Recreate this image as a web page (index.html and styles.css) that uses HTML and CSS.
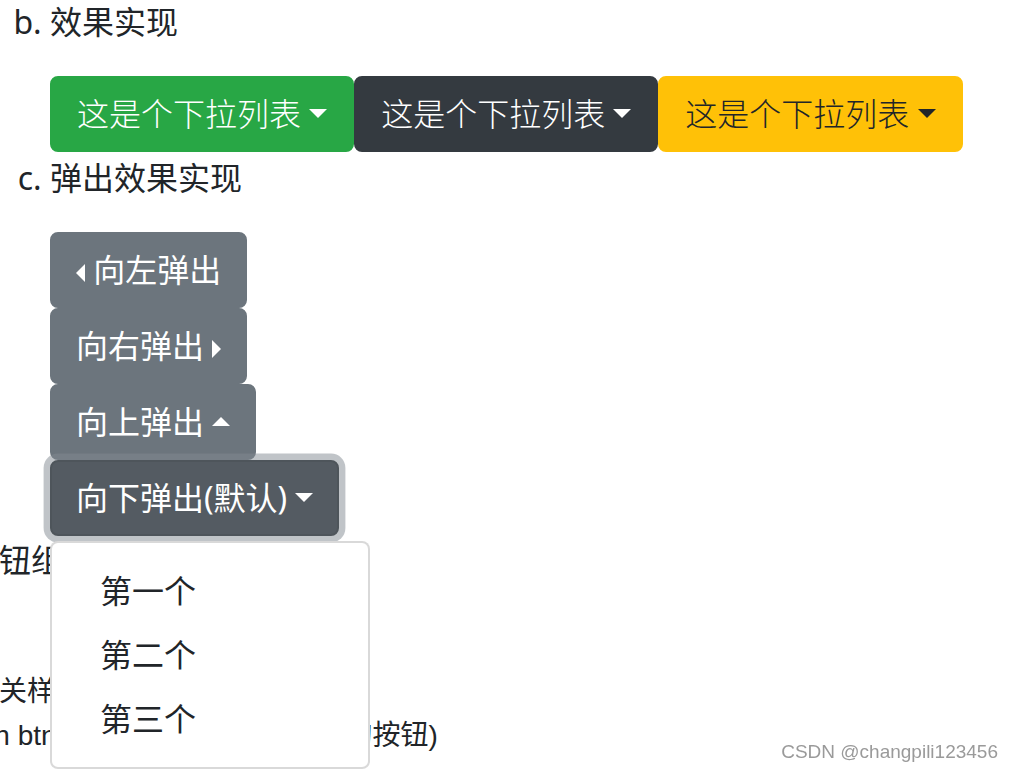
FILE: index.html
```html
<!DOCTYPE html>
<html lang="zh-CN">
  <head>
    <meta charset="UTF-8" />
    <meta name="viewport" content="width=device-width, initial-scale=1.0" />
    <title>下拉菜单</title>
    <link rel="stylesheet" href="styles.css">
  </head>
  <body>
    <ol class="steps" start="2">
      <li class="step">
        <p class="step-title">效果实现</p>
        <div class="btn-row">
          <div class="drop">
            <button class="btn btn-success caret-down">这是个下拉列表</button>
          </div>
          <div class="drop">
            <button class="btn btn-dark caret-down">这是个下拉列表</button>
          </div>
          <div class="drop">
            <button class="btn btn-warning caret-down">这是个下拉列表</button>
          </div>
        </div>
      </li>
      <li class="step">
        <p class="step-title">弹出效果实现</p>
        <div class="popups">
          <div class="drop">
            <button class="btn btn-secondary caret-left">向左弹出</button>
          </div>
          <div class="drop">
            <button class="btn btn-secondary caret-right">向右弹出</button>
          </div>
          <div class="drop">
            <button class="btn btn-secondary caret-up">向上弹出</button>
          </div>
          <div class="drop">
            <button class="btn btn-secondary caret-down active">向下弹出(默认)</button>
            <!-- 展开的菜单 -->
            <div class="menu">
              <a class="menu-item" href="#">第一个</a>
              <a class="menu-item" href="#">第二个</a>
              <a class="menu-item" href="#">第三个</a>
            </div>
          </div>
        </div>
      </li>
    </ol>

    <div class="next">
      <p class="next-title">按钮组</p>
      <p class="next-line">相关样式</p>
      <p class="next-code">btn btn-outline-primary(深蓝色的按钮)</p>
    </div>

    <div class="watermark">CSDN @changpili123456</div>
  </body>
</html>
```

FILE: styles.css
```css
* {
  box-sizing: border-box;
}

html,
body {
  min-height: 100%;
}

body {
  margin: 0;
  min-height: 772px;
  font-family: "Noto Sans", "Noto Sans CJK SC", sans-serif;
  font-size: 32px;
  line-height: 48px;
  color: #212529;
  background-color: #fff;
}

p {
  margin: 0;
}

.steps {
  list-style: lower-alpha;
  margin: -2px 0 0;
  padding-left: 50px;
}

.step + .step {
  margin-top: 2px;
}

.btn-row {
  display: flex;
  margin-top: 30px;
}

.popups {
  margin-top: 30px;
}

.drop {
  position: relative;
}

.btn {
  display: inline-block;
  font-family: inherit;
  font-size: 32px;
  line-height: 48px;
  padding: 12px 24px;
  border: 2px solid transparent;
  border-radius: 8px;
  color: #fff;
  cursor: pointer;
  white-space: nowrap;
}

.btn-row .btn {
  font-weight: 300;
  padding-right: 25px;
  padding-left: 25px;
}

.btn-success {
  background-color: #28a745;
  border-color: #28a745;
}

.btn-dark {
  background-color: #343a40;
  border-color: #343a40;
}

.btn-warning {
  background-color: #ffc107;
  border-color: #ffc107;
  color: #212529;
}

.btn-secondary {
  background-color: #6c757d;
  border-color: #6c757d;
}

.btn-secondary.active {
  background-color: #545b62;
  border-color: #4e555b;
  box-shadow: 0 0 0 6.4px rgba(130, 138, 145, 0.5);
}

/* 小三角 */
.caret-down::after,
.caret-up::after,
.caret-right::after,
.caret-left::before {
  content: "";
  display: inline-block;
  width: 0;
  height: 0;
}

.caret-down::after {
  margin-left: 0.255em;
  vertical-align: 0.255em;
  border-top: 0.3em solid;
  border-right: 0.3em solid transparent;
  border-left: 0.3em solid transparent;
}

.caret-up::after {
  margin-left: 0.255em;
  vertical-align: 0.255em;
  border-bottom: 0.3em solid;
  border-right: 0.3em solid transparent;
  border-left: 0.3em solid transparent;
}

.caret-right::after {
  margin-left: 0.255em;
  vertical-align: 0;
  border-left: 0.3em solid;
  border-top: 0.3em solid transparent;
  border-bottom: 0.3em solid transparent;
}

.caret-left::before {
  margin-right: 0.255em;
  vertical-align: 0;
  border-right: 0.3em solid;
  border-top: 0.3em solid transparent;
  border-bottom: 0.3em solid transparent;
}

.menu {
  position: absolute;
  top: 100%;
  left: 0;
  z-index: 2;
  min-width: 320px;
  margin-top: 5px;
  padding: 16px 0;
  background-color: #fff;
  border: 2px solid rgba(0, 0, 0, 0.15);
  border-radius: 8px;
}

.menu-item {
  display: block;
  padding: 8px 48px;
  color: #212529;
  text-decoration: none;
  white-space: nowrap;
}

.next-title {
  margin-left: -33px;
}

.next-line,
.next-code {
  font-size: 28px;
  line-height: 42px;
  white-space: nowrap;
}

.next-line {
  margin: 85px 0 0 -29px;
}

.next-code {
  margin: 4px 0 0 -29px;
  font-family: "Liberation Sans", "Noto Sans CJK SC", sans-serif;
}

.watermark {
  position: fixed;
  right: 16px;
  bottom: 11px;
  font-family: "Liberation Sans", Arial, sans-serif;
  font-size: 19px;
  line-height: 19px;
  color: #9a9a9a;
}
```
